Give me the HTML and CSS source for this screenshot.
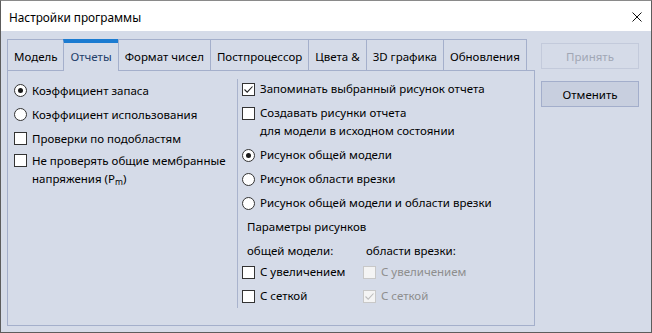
FILE: index.html
```html
<!DOCTYPE html>
<html lang="ru">
<head>
    <meta charset="UTF-8">
    <title>Настройки программы</title>
    <link rel="stylesheet" href="styles.css">
</head>
<body>
    <div class="window">
        <div class="titlebar">
            <span class="title">Настройки программы</span>
            <span class="close">
                <svg width="10" height="10" viewBox="0 0 10 10"><path d="M0.5 0.5L9.5 9.5M9.5 0.5L0.5 9.5" stroke="#111" stroke-width="1" fill="none"/></svg>
            </span>
        </div>

        <div class="body">
            <div class="tabs">
                <div class="tab-strip">
                    <div class="tab">Модель</div>
                    <div class="tab active">Отчеты</div>
                    <div class="tab">Формат чисел</div>
                    <div class="tab">Постпроцессор</div>
                    <div class="tab">Цвета &amp;</div>
                    <div class="tab">3D графика</div>
                    <div class="tab">Обновления</div>
                    <div class="tab-fill"></div>
                </div>

                <div class="panel">
                    <!-- left column: check mode -->
                    <div class="col col-left">
                        <div class="opt"><span class="box radio checked"></span><span>Коэффициент запаса</span></div>
                        <div class="opt"><span class="box radio"></span><span>Коэффициент использования</span></div>
                        <div class="opt"><span class="box"></span><span>Проверки по подобластям</span></div>
                        <div class="opt opt-close"><span class="box"></span><span>Не проверять общие мембранные<br>напряжения (P<sub>m</sub>)</span></div>
                    </div>

                    <!-- right column: report pictures -->
                    <div class="col col-right">
                        <div class="opt"><span class="box checked"><svg width="11" height="11" viewBox="0 0 11 11"><path d="M1.5 5.5L4.2 8.2L9.5 2.5" stroke="#222" stroke-width="1.1" fill="none"/></svg></span><span>Запоминать выбранный рисунок отчета</span></div>
                        <div class="opt"><span class="box"></span><span>Создавать рисунки отчета<br>для модели в исходном состоянии</span></div>
                        <div class="opt"><span class="box radio checked"></span><span>Рисунок общей модели</span></div>
                        <div class="opt"><span class="box radio"></span><span>Рисунок области врезки</span></div>
                        <div class="opt"><span class="box radio"></span><span>Рисунок общей модели и области врезки</span></div>

                        <div class="params-title">Параметры рисунков</div>
                        <div class="params-grid">
                            <div class="params-head">общей модели:</div>
                            <div class="params-head params-head-right">области врезки:</div>
                            <div class="opt"><span class="box"></span><span>С увеличением</span></div>
                            <div class="opt disabled"><span class="box"></span><span>С увеличением</span></div>
                            <div class="opt"><span class="box"></span><span>С сеткой</span></div>
                            <div class="opt disabled"><span class="box checked"><svg width="11" height="11" viewBox="0 0 11 11"><path d="M1.5 5.5L4.2 8.2L9.5 2.5" stroke="#bdbdbd" stroke-width="1.1" fill="none"/></svg></span><span>С сеткой</span></div>
                        </div>
                    </div>
                </div>
            </div>

            <div class="buttons">
                <button class="btn" disabled>Принять</button>
                <button class="btn">Отменить</button>
            </div>
        </div>
    </div>
</body>
</html>
```

FILE: styles.css
```css
* {
    margin: 0;
    padding: 0;
    box-sizing: border-box;
}

body {
    font-family: "Noto Sans", "Liberation Sans", sans-serif;
    font-size: 11.5px;
    color: #000;
}

.window {
    width: 652px;
    height: 333px;
    border: 1px solid #5c5c5c;
    border-top-color: #8a8a8a;
    background: #d5dbe8;
    display: flex;
    flex-direction: column;
}

.titlebar {
    height: 30px;
    background: #fff;
    display: flex;
    align-items: center;
    justify-content: space-between;
    padding: 1px 9px 0 8px;
}

.title {
    font-size: 11.8px;
}

.close {
    display: flex;
}

.body {
    flex: 1;
    display: flex;
    gap: 6px;
    padding: 8px 0 6px 6px;
}

/* tabs */
.tabs {
    width: 528px;
    display: flex;
    flex-direction: column;
}

.tab-strip {
    display: flex;
    height: 32px;
}

.tab {
    border: 1px solid #a4afcb;
    margin-left: -1px;
    padding: 3px 6px 0;
    display: flex;
    align-items: center;
    white-space: nowrap;
}

.tab:first-child {
    margin-left: 0;
}

.tab.active {
    border-top: 4px solid #1b7bd1;
    border-bottom-color: transparent;
    padding-top: 0;
    color: #23406a;
}

.tab-fill {
    flex: 1;
    border-bottom: 1px solid #a4afcb;
}

.panel {
    flex: 1;
    border: 1px solid #a4afcb;
    border-top: none;
    display: flex;
    padding: 8px 0 17px 0;
}

.col {
    display: flex;
    flex-direction: column;
    gap: 6px;
}

.col-left {
    width: 229px;
    padding: 2.5px 0 0 6px;
}

.col-right {
    flex: 1;
    border-left: 1px solid #a9b3cd;
    padding: 1px 0 0 4px;
}

/* options */
.opt {
    display: flex;
    align-items: flex-start;
    gap: 5px;
    line-height: 18px;
    white-space: nowrap;
}

.opt-close {
    margin-top: -2px;
}

.opt sub {
    font-size: 8.5px;
    line-height: 0;
    vertical-align: -2px;
}

.box {
    flex: none;
    width: 13px;
    height: 13px;
    margin-top: 2.5px;
    border: 1px solid #333;
    background: #fff;
    display: flex;
    align-items: center;
    justify-content: center;
}

.radio {
    border-radius: 50%;
}

.radio.checked::after {
    content: "";
    width: 5px;
    height: 5px;
    border-radius: 50%;
    background: #1a1a1a;
}

.opt.disabled {
    color: #8e8e8e;
}

.opt.disabled .box {
    border-color: #c8c8c8;
    background: #f4f4f4;
}

.params-title {
    padding-left: 5px;
    line-height: 18px;
}

.params-grid {
    display: grid;
    grid-template-columns: 121px 1fr;
    row-gap: 6px;
}

.params-head {
    padding-left: 5px;
    line-height: 18px;
    margin-bottom: -3px;
}

.params-head-right {
    padding-left: 3px;
}

/* buttons */
.buttons {
    width: 98px;
    display: flex;
    flex-direction: column;
    gap: 12px;
    padding-top: 4px;
}

.btn {
    height: 26px;
    font: inherit;
    border: 1px solid #a3aecb;
    background: #c8cfdf;
    color: #000;
}

.btn:disabled {
    border-color: #c3cadb;
    background: #d5dbe8;
    color: #a1a7b5;
}
```
